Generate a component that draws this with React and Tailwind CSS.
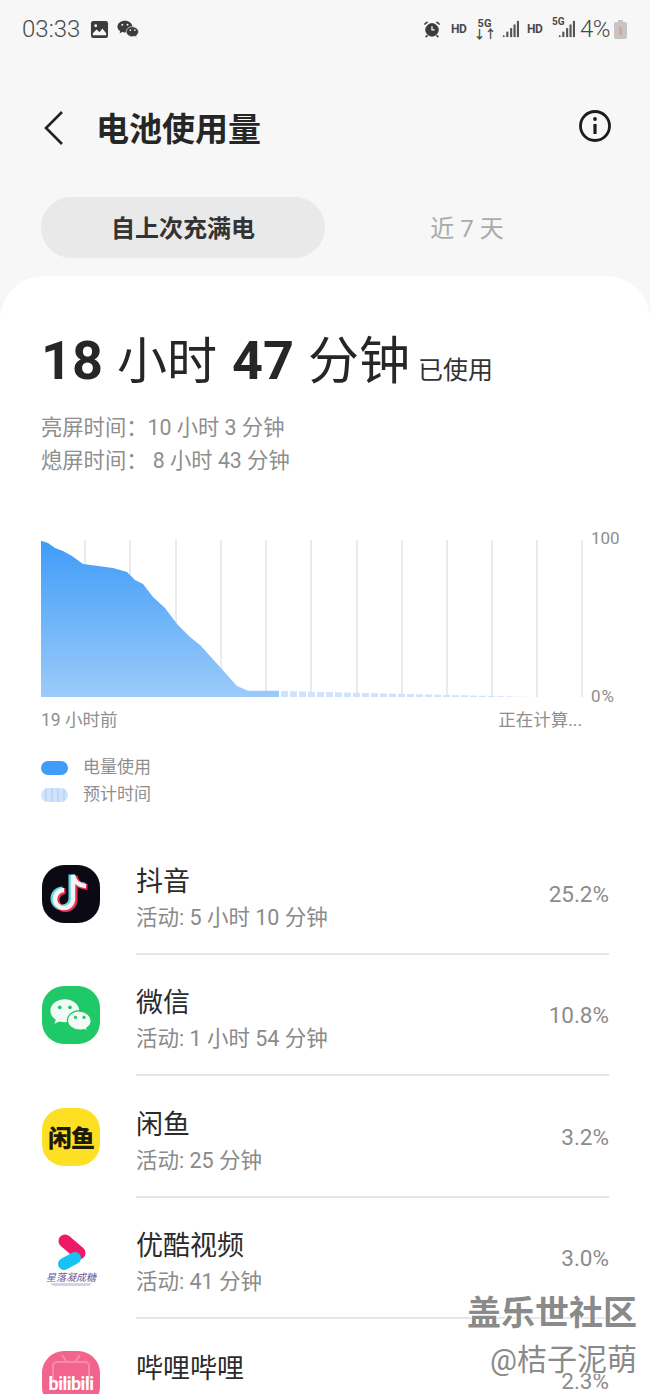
const cjk = "font-['Roboto','Noto_Sans_CJK_SC',sans-serif]"

const gridLines = [85, 130, 176, 221, 266, 311, 357, 402, 447, 492, 537, 582]

const apps = [
    { name: "抖音", time: "活动: 5 小时 10 分钟", pct: "25.2%", icon: <TikTok /> },
    { name: "微信", time: "活动: 1 小时 54 分钟", pct: "10.8%", icon: <WeChatIcon /> },
    { name: "闲鱼", time: "活动: 25 分钟", pct: "3.2%", icon: <Xianyu /> },
    { name: "优酷视频", time: "活动: 41 分钟", pct: "3.0%", icon: <Youku /> },
    { name: "哔哩哔哩", time: "", pct: "2.3%", icon: <Bili /> },
]

function Bubbles({ back, front, eye }) {
    return (
        <>
            <path d="M21 12c-9.400 0-17 6-17 13.600 0 4.300 2.500 8.100 6.300 10.600l-1.500 4.800 5.500-2.900c2.100.6 4.400 1 6.700 1 9.400 0 17-6.100 17-13.500S30.400 12 21 12z" fill={back} />
            <path d="M38.500 25.500c-8 0-14.500 5.200-14.500 11.500s6.500 11.500 14.500 11.500c1.800 0 3.500-.3 5.100-.8l4.400 2.500-1.200-4.100c3.200-2.100 5.200-5.200 5.200-8.600 0-6.300-6.500-11.500-13.500-11.500z" fill={front} stroke={eye} strokeWidth="1.600" />
            <circle cx="15" cy="21.500" r="2.200" fill={eye} />
            <circle cx="27" cy="21.500" r="2.200" fill={eye} />
            <circle cx="33.500" cy="33.500" r="1.900" fill={eye} />
            <circle cx="43.500" cy="33.500" r="1.900" fill={eye} />
        </>
    )
}

function Squircle({ className, children }) {
    return (
        <div className={`w-[58px] h-[58px] rounded-[22px] flex items-center justify-center overflow-hidden ${className}`}>
            {children}
        </div>
    )
}

function TikTok() {
    const note = "M31 10v24a9 9 0 1 1-9-9M31 10c.8 6 5.500 10.500 13 11"
    return (
        <Squircle className="bg-[#0b0a14]">
            <svg width="58" height="58" viewBox="0 0 58 58" fill="none" strokeWidth="6">
                <path d={note} stroke="#5fd8dc" transform="translate(-1.500 -.5)" />
                <path d={note} stroke="#e8305a" transform="translate(1.500 1)" />
                <path d={note} stroke="#f4f4f4" strokeWidth="4.500" />
            </svg>
        </Squircle>
    )
}

function WeChatIcon() {
    return (
        <Squircle className="bg-[#1fc968]">
            <svg width="58" height="58" viewBox="0 0 58 58">
                <g transform="translate(5 3) scale(.85)">
                    <Bubbles back="#f4fbf6" front="#f4fbf6" eye="#1fc968" />
                </g>
            </svg>
        </Squircle>
    )
}

function Xianyu() {
    return (
        <Squircle className="bg-[#fde023]">
            <span className="text-[24px] font-black text-[#1f1a08] tracking-[-1px] font-['Noto_Sans_CJK_SC',sans-serif]">闲鱼</span>
        </Squircle>
    )
}

function Youku() {
    return (
        <div className="w-[58px] h-[58px] flex flex-col items-center">
            <svg width="58" height="42" viewBox="0 0 58 42" className="shrink-0">
                <path d="M23 12l14 12" stroke="#ee1a68" strokeWidth="13" strokeLinecap="round" />
                <path d="M33 29l-11 6" stroke="#19c1f4" strokeWidth="12" strokeLinecap="round" />
            </svg>
            <span className="text-[10px] leading-[12px] text-[#6a5c9c] italic whitespace-nowrap font-['Noto_Sans_CJK_SC',sans-serif]">星落凝成糖</span>
            <div className="w-[40px] h-[3px] rounded-b-full bg-[#d8cfe8]" />
        </div>
    )
}

function Bili() {
    return (
        <div className="w-[58px] h-[58px] rounded-[22px] bg-[#f2638e] flex justify-center pt-[21px] relative overflow-hidden">
            <svg width="58" height="30" viewBox="0 0 58 30" className="absolute top-[2px] left-0" fill="none" stroke="#f78bab" strokeWidth="2">
                <rect x="11" y="9" width="36" height="20" rx="4" />
                <path d="M20 2l5 7M38 2l-5 7" />
            </svg>
            <span className="relative text-[18px] leading-[24px] font-bold tracking-[-.5px] text-white font-['Roboto',sans-serif]">bilibili</span>
        </div>
    )
}

function AppRow({ app, last }) {
    return (
        <div className="flex h-[121.5px]">
            <div className="w-[95px] pl-[1px] flex items-center shrink-0">{app.icon}</div>
            <div className={`flex-1 flex items-center justify-between ${last ? "" : "border-b-2 border-[#e6e6e6]"}`}>
                <div className="flex flex-col mt-[14px]">
                    <span className="text-[27px] leading-[36px] text-[#2b2b2b]">{app.name}</span>
                    <span className="text-[21.500px] h-[36px] leading-[36px] text-[#8a8a8a]">{app.time}</span>
                </div>
                <span className="text-[22.500px] mt-[4px] text-[#8c8c8c]">{app.pct}</span>
            </div>
        </div>
    )
}

function Signal({ className = "" }) {
    return (
        <svg width="17" height="18" viewBox="0 0 20 20" className={className} preserveAspectRatio="none" fill="#555">
            <rect x="1" y="17" width="2" height="2" />
            <rect x="5" y="13" width="2.500" height="6" />
            <rect x="9.500" y="9" width="2.500" height="10" />
            <rect x="13.500" y="5" width="2.500" height="14" />
            <rect x="17.500" y="1" width="2.500" height="18" />
        </svg>
    )
}

function StatusBar() {
    return (
        <div className="h-[60px] pl-[22px] pr-[23px] pt-[17px] flex items-start justify-between text-[#4a4a4a]">
            <div className="flex items-center h-[24px]">
                <span className="text-[24px] leading-[24px] font-light">03:33</span>
                <svg width="19" height="19" viewBox="0 0 20 20" className="ml-[10px]">
                    <rect x="1" y="1" width="18" height="18" rx="2.500" fill="#3c3c3c" />
                    <path d="M3 14l4-4 3 3 3-4 4 5v2H3z" fill="#f7f7f7" />
                    <circle cx="6" cy="6" r="1.500" fill="#f7f7f7" />
                </svg>
                <svg width="22" height="20" viewBox="3 10 50 42" className="ml-[8px]">
                    <Bubbles back="#3c3c3c" front="#3c3c3c" eye="#f7f7f7" />
                </svg>
            </div>
            <div className="flex items-center h-[24px]">
                <svg width="18" height="20" viewBox="0 0 20 20" fill="none" stroke="#3c3c3c">
                    <circle cx="10" cy="11" r="7" fill="#3c3c3c" />
                    <path d="M10 7v4h3" stroke="#f7f7f7" strokeWidth="1.500" />
                    <path d="M1.500 5L5 2M18.500 5L15 2M5 17l-2 2M15 17l2 2" strokeWidth="1.800" />
                </svg>
                <span className="ml-[10px] w-[16px] text-[12px] font-bold tracking-[-.5px] whitespace-nowrap">HD</span>
                <div className="ml-[10px] w-[15px] flex flex-col items-center">
                    <span className="text-[11px] leading-[11px] font-bold whitespace-nowrap">5G</span>
                    <span className="text-[12px] leading-[12px] font-bold tracking-[-1px] whitespace-nowrap">↓↑</span>
                </div>
                <Signal className="ml-[10px]" />
                <span className="ml-[8px] w-[16px] text-[12px] font-bold tracking-[-.5px] whitespace-nowrap">HD</span>
                <div className="relative ml-[9px] w-[23px] h-[20px]">
                    <Signal className="absolute right-0 top-[1px]" />
                    <span className="absolute left-0 -top-[2px] text-[10px] leading-[10px] font-bold">5G</span>
                </div>
                <span className="ml-[5px] w-[30px] text-[24px] leading-[24px] font-light tracking-[-.5px] whitespace-nowrap">4%</span>
                <div className="relative ml-[4px] w-[13px] h-[17px] mt-[3px] rounded-[2px] bg-[#c9c4c2]">
                    <div className="absolute -top-[2px] left-[4px] w-[5px] h-[2px] bg-[#c9c4c2]" />
                    <div className="absolute bottom-[4px] left-[5px] w-[3px] h-[8px] bg-[#d8a49c]" />
                </div>
            </div>
        </div>
    )
}

function Chart() {
    const curve = "M41 540.700L48 543L55 548L63 551L72 556L83 564L113 568L127 572L135 580L143 584L153 597L165 608L177 624L190 637L200 645L220 667L237 686L248 690.700L279 690.700L279 697L41 697Z"
    const dashes = []
    for (let x = 281; x < 530; x += 9) {
        const t = (x - 279) / 251
        dashes.push(<rect key={x} x={x} y={691 + t * 6} width="7" height={6 - t * 6} fill="#cfe4fb" />)
    }
    return (
        <svg width="545" height="159" viewBox="41 539 545 159" className="shrink-0">
            <defs>
                <linearGradient id="drain" x1="0" y1="0" x2="0" y2="1">
                    <stop offset="0" stopColor="#3f9cf8" />
                    <stop offset="1" stopColor="#9ccbfa" />
                </linearGradient>
            </defs>
            {gridLines.map(x => <line key={x} x1={x} x2={x} y1="540" y2="697" stroke="#e4e4e6" strokeWidth="1.500" />)}
            <path d={curve} fill="url(#drain)" />
            {dashes}
        </svg>
    )
}

export default function App() {
    return (
        <div className={`relative w-[650px] h-[1394px] overflow-hidden bg-[#f7f7f7] ${cjk}`}>
            <StatusBar />

            <div className="h-[137px] pl-[43px] pr-[38px] pt-[45px] flex items-start">
                <svg width="22" height="46" viewBox="0 0 22 46" fill="none" stroke="#222" strokeWidth="2.600">
                    <path d="M19 7L3 23l16 16" />
                </svg>
                <h1 className="ml-[31px] mt-[2px] text-[33px] leading-[46px] font-bold text-[#262626]">电池使用量</h1>
                <svg width="34" height="34" viewBox="0 0 34 34" className="ml-auto mt-[4px]" fill="none" stroke="#1c1c1c" strokeWidth="2.800">
                    <circle cx="17" cy="17" r="14.500" />
                    <path d="M17 15v10" strokeWidth="3.200" />
                    <circle cx="17" cy="10" r="1.900" fill="#1c1c1c" stroke="none" />
                </svg>
            </div>

            <div className="h-[79px] pl-[41px] flex items-start">
                <div className="w-[284px] h-[61px] pt-[3px] rounded-full bg-[#e9e9e9] flex items-center justify-center text-[24px] font-bold text-[#333]">
                    自上次充满电
                </div>
                <div className="w-[284px] h-[61px] pt-[3px] flex items-center justify-center text-[24px] text-[#aaa]">
                    近 7 天
                </div>
            </div>

            <div className="bg-white rounded-t-[44px] h-[1118px] pt-[52px] pl-[41px] pr-[41px]">
                <div className="flex items-baseline h-[66px] text-[#262626]">
                    <span className="text-[54px] leading-[66px] font-bold">18</span>
                    <span className="text-[50px] leading-[66px] ml-[14px]">小时</span>
                    <span className="text-[54px] leading-[66px] font-bold ml-[15px]">47</span>
                    <span className="text-[51px] leading-[66px] ml-[14px]">分钟</span>
                    <span className="text-[25px] leading-[66px] ml-[8px] text-[#333]">已使用</span>
                </div>
                <div className="mt-[17px] text-[21.300px] leading-[33px] text-[#8e8e8e]">
                    <p>亮屏时间：10 小时 3 分钟</p>
                    <p>熄屏时间： 8 小时 43 分钟</p>
                </div>

                <div className="mt-[62px] flex items-start h-[159px]">
                    <Chart />
                    <div className="ml-[5px] -mt-[11px] h-[178px] shrink-0 flex flex-col justify-between text-[17px] leading-[20px] text-[#8e8e8e]">
                        <span>100</span>
                        <span className="tracking-[1px]">0%</span>
                    </div>
                </div>
                <div className="mt-[10px] w-[541px] flex justify-between text-[17.500px] leading-[24px] text-[#8e8e8e]">
                    <span>19 小时前</span>
                    <span>正在计算...</span>
                </div>

                <div className="mt-[22px] flex flex-col text-[17px] leading-[27px] text-[#8e8e8e]">
                    <div className="flex items-center gap-[15px]">
                        <div className="w-[27px] h-[14px] rounded-full bg-[#409cf7]" />
                        <span>电量使用</span>
                    </div>
                    <div className="flex items-center gap-[15px]">
                        <div className="w-[27px] h-[14px] rounded-full bg-[repeating-linear-gradient(90deg,#cfe4fb_0,#cfe4fb_4px,#b9d8f8_4px,#b9d8f8_6px)]" />
                        <span>预计时间</span>
                    </div>
                </div>

                <div className="mt-[25px]">
                    {apps.map((app, i) => <AppRow key={app.name} app={app} last={i === apps.length - 1} />)}
                </div>
            </div>

            {/* watermark sits on top of the list */}
            <div className="absolute right-[13px] top-[1292px] flex flex-col items-end text-[#8a8a8a] [text-shadow:1px_1px_0_#fff,-1px_-1px_0_#fff]">
                <span className="text-[34px] leading-[42px] font-bold">盖乐世社区</span>
                <span className="text-[30px] leading-[44px] mt-[4px]">@桔子泥萌</span>
            </div>
        </div>
    )
}
